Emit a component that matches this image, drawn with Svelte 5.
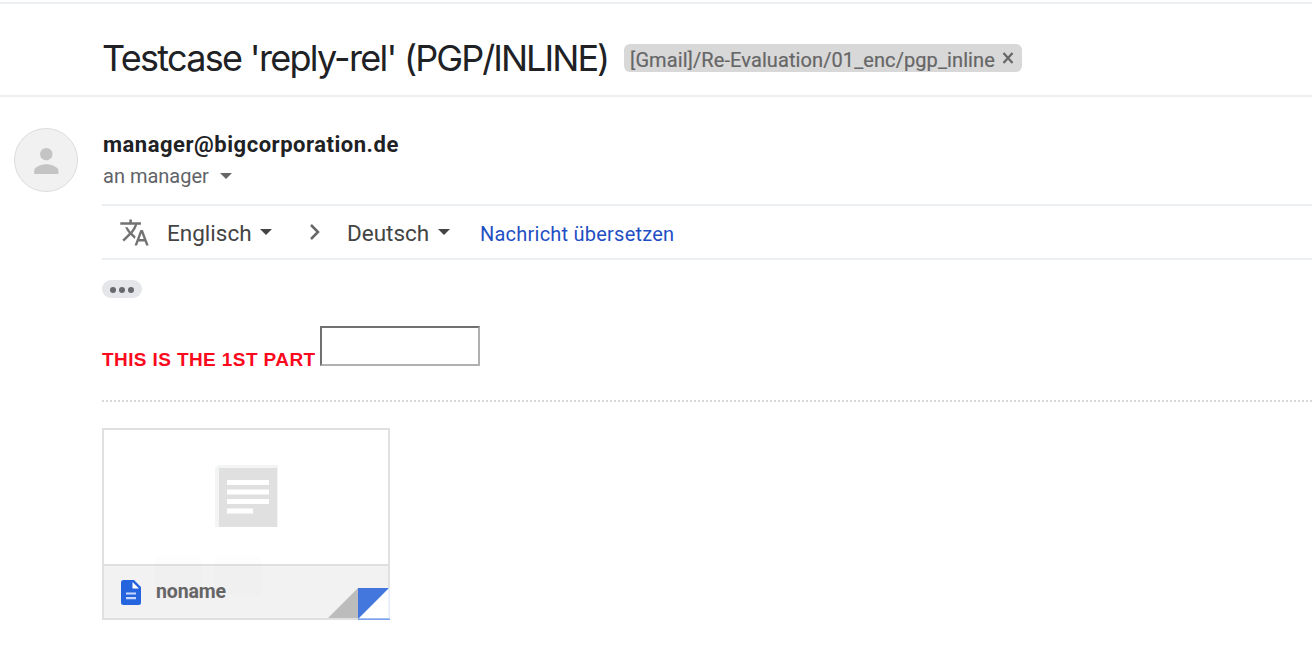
<script>
  const label = '[Gmail]/Re-Evaluation/01_enc/pgp_inline';
  const languages = { from: 'Englisch', to: 'Deutsch' };
</script>

<main>
  <header>
    <h1>Testcase 'reply-rel' <span>(PGP/INLINE)</span></h1>
    <div class="label">
      <span class="label-text">{label}</span>
      <svg class="close" width="12" height="12" viewBox="0 0 12 12"><path d="M1.5 1 10.5 11M10.5 1 1.5 11" /></svg>
    </div>
  </header>

  <article>
    <div class="avatar">
      <svg width="64" height="64" viewBox="0 0 64 64">
        <circle cx="32" cy="32" r="31.5" fill="#f1f1f1" stroke="#dcdcdc" />
        <circle cx="32.3" cy="26.2" r="6.2" fill="#c4c4c4" />
        <path d="M20.2 46v-3.2c0-4.2 7.6-6.6 12.1-6.6s12.1 2.4 12.1 6.6V46z" fill="#c4c4c4" />
      </svg>
    </div>
    <div class="content">
      <div class="sender"><span>manager@bigcorporation.de</span></div>
      <div class="recipient"><span>an manager</span><i class="caret"></i></div>

      <div class="translate">
        <svg class="icon" width="31" height="31" viewBox="0 0 24 24">
          <path fill="#737373" d="M12.87 15.07l-2.54-2.51.03-.03c1.74-1.94 2.98-4.17 3.71-6.53H17V4h-7V2H8v2H1v1.99h11.17C11.5 7.92 10.44 9.75 9 11.35 8.07 10.32 7.3 9.19 6.69 8h-2c.73 1.63 1.73 3.17 2.98 4.56l-5.09 5.02L4 19l5-5 3.11 3.11.76-2.04zM18.5 10h-2L12 22h2l1.12-3h4.75L21 22h2l-4.5-12zm-2.62 7l1.62-4.33L19.12 17h-3.24z" />
        </svg>
        <span class="lang from">{languages.from}</span><i class="caret"></i>
        <svg class="chevron" width="12" height="18" viewBox="0 0 12 18"><path d="M2 2l7 7-7 7" /></svg>
        <span class="lang to">{languages.to}</span><i class="caret"></i>
        <span class="link">Nachricht übersetzen</span>
      </div>

      <div class="more"><i></i><i></i><i></i></div>

      <div class="part"><strong>THIS IS THE 1ST PART</strong><input aria-label="Text" /></div>

      <div class="separator"></div>

      <div class="card">
        <div class="preview">
          <svg width="64" height="64" viewBox="0 0 64 64">
            <path fill="#f3f4f4" d="M3 0h60v62H0V3z" />
            <path fill="#e0e0e0" d="M4 3h58v59H4z" />
            <path fill="#fff" d="M12 15h42v5H12zM12 24.500h42v5H12zM12 34h42v5H12zM12 43.500h26v5H12z" />
          </svg>
        </div>
        <div class="file">
          <svg class="doc" width="20" height="25" viewBox="0 0 20 25">
            <path fill="#2465df" d="M2.500 0H13l7 7v15.500a2.500 2.500 0 0 1-2.500 2.500h-15A2.500 2.500 0 0 1 0 22.500v-20A2.500 2.500 0 0 1 2.500 0z" />
            <path fill="#fff" d="M11.500 2v6.500H18z" />
            <path fill="#c5d8fb" d="M5 12.500h10v2H5zM5 17h10v2.200H5z" />
          </svg>
          <span>noname</span>
        </div>
        <svg class="actions" width="108" height="38" viewBox="0 0 108 38">
          <rect width="47" height="38" rx="3" />
          <rect x="59" width="48" height="38" rx="3" />
        </svg>
        <svg class="fold" width="62" height="32" viewBox="0 0 62 32">
          <path fill="#fff" d="M30 0h32v32H30z" />
          <path fill="#bcbcbc" d="M0 30 30 0v30z" />
          <path fill="#4477dd" d="M30 0h31L30 31z" />
          <path fill="#7aa2ed" d="M30 30.300h32V32H30z" />
          <path fill="#e3ebfb" d="M60.500 1H62v29.300h-1.500z" />
        </svg>
      </div>
    </div>
  </article>
</main>

<style>
  :global(body) { background: #fff; overflow: hidden; }
  main { width: 1312px; height: 660px; box-sizing: border-box; padding-top: 2px; overflow: hidden; font-family: Roboto, sans-serif; color: #202124; }
  header { height: 91px; border-top: 2px solid #eceff1; border-bottom: 2px solid #eceff1; display: flex; padding-left: 102px; }
  h1 { margin: 0; width: 522px; font: 400 36px/48px Inter, sans-serif; letter-spacing: -1.7px; padding-top: 30px; white-space: nowrap; color: #202124; }
  h1 span { letter-spacing: -1.95px; }
  .label { margin-top: 40px; width: 398px; height: 28px; border-radius: 6px; background: #d8d8d8; display: flex; align-items: center; box-sizing: border-box; padding-left: 6px; color: #666; font-size: 20px; white-space: nowrap; }
  .label-text { width: 372px; line-height: 28px; padding-top: 3px; letter-spacing: 0.09px; -webkit-text-stroke: 0.2px #666; }
  .close { fill: none; stroke: #666; stroke-width: 2.2; }
  article { display: flex; }
  .avatar { width: 102px; box-sizing: border-box; padding: 31px 0 0 14px; flex: none; }
  .avatar svg { display: block; }
  .content { flex: 1; min-width: 0; }
  .sender { padding: 34px 0 0 1px; font-size: 22px; line-height: 28px; font-weight: 700; letter-spacing: 0.52px; }
  .recipient { display: flex; align-items: center; height: 28px; padding: 3px 0 0 1px; font-size: 20px; color: #5f6368; }
  .caret { border: 6px solid transparent; border-top-color: #444; border-bottom: 0; flex: none; }
  .recipient .caret { margin-left: 11px; border-top-color: #666; }
  .translate { margin-top: 14px; height: 52px; border-top: 2px solid #eceff1; border-bottom: 2px solid #eceff1; display: flex; align-items: center; }
  .icon { margin-left: 17px; }
  .lang { font-size: 22.5px; color: #444; line-height: 28px; padding-top: 1px; white-space: nowrap; }
  .from { width: 86px; margin-left: 17px; }
  .translate .caret { margin-left: 7px; }
  .chevron { margin-left: 37px; fill: none; stroke: #666; stroke-width: 2.5; }
  .to { width: 84px; margin-left: 26px; }
  .link { margin-left: 30px; font-size: 20px; letter-spacing: 0.23px; color: #1f4fc4; padding-top: 3px; white-space: nowrap; }
  .more { margin-top: 20px; width: 40px; height: 18px; border-radius: 9px; background: #e5e6ea; display: flex; align-items: center; justify-content: center; gap: 3px; }
  .more i { width: 6px; height: 6px; border-radius: 50%; background: #66696d; margin-top: 2px; }
  .part { margin-top: 28px; height: 40px; display: flex; }
  .part strong { width: 218px; padding-top: 21px; font: 700 19px/26px "Liberation Sans", sans-serif; letter-spacing: 0.4px; color: #fb0a1d; white-space: nowrap; }
  .part input { width: 160px; height: 40px; box-sizing: border-box; padding: 0; background: #fff; border: 2px solid; border-color: #707070 #b0b0b0 #b0b0b0 #707070; border-radius: 0; outline: 0; }
  .separator { margin-top: 34px; height: 2px; background: repeating-linear-gradient(90deg, #d9d9d9 0 2px, #fff 2px 4px); }
  .card { position: relative; margin-top: 26px; width: 288px; height: 192px; box-sizing: border-box; border: 2px solid #e0e0e0; }
  .preview { height: 134px; border-bottom: 2px solid #e0e0e0; display: flex; justify-content: center; align-items: center; padding-left: 2px; }
  .file { height: 52px; background: #f2f2f2; display: flex; align-items: center; }
  .doc { margin-left: 17px; }
  .file span { margin-left: 15px; padding-bottom: 1px; font-size: 19.5px; letter-spacing: -0.15px; font-weight: 700; color: #666; }
  .actions { position: absolute; left: 51px; top: 127px; fill: rgba(0, 0, 0, 0.007); }
  .fold { position: absolute; right: -2px; bottom: -2px; }
</style>
